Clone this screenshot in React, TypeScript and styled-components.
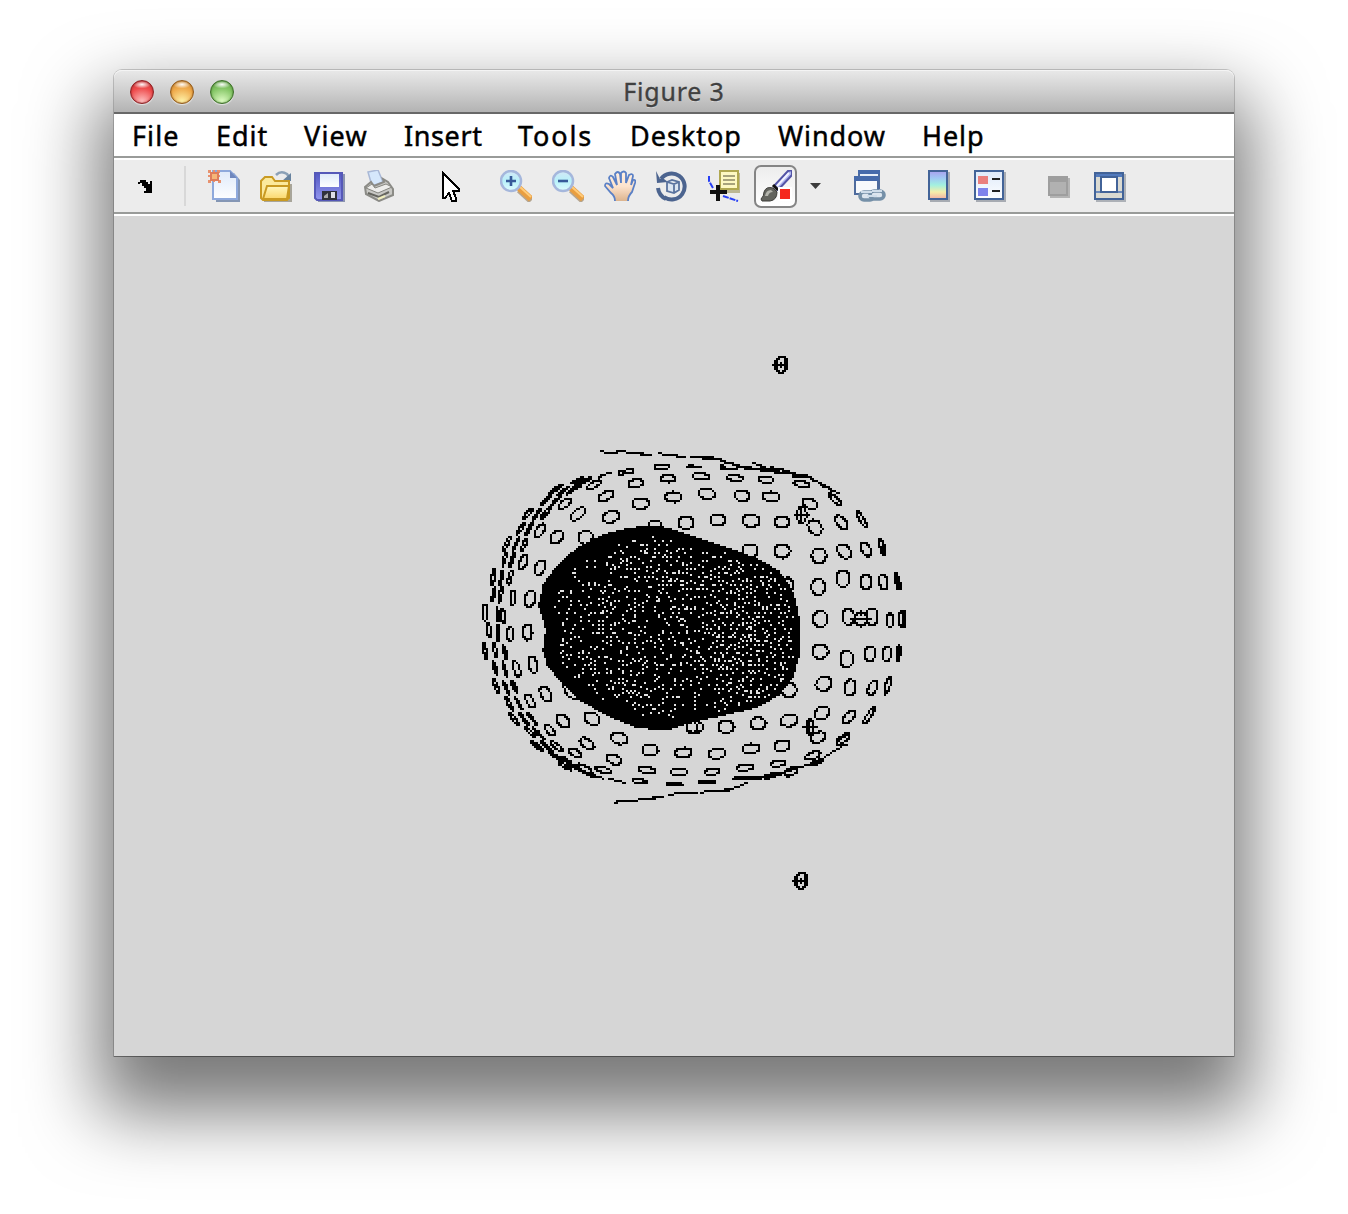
import React from "react";
import styled, { createGlobalStyle } from "styled-components";

const Global = createGlobalStyle`
  *{box-sizing:border-box}
  html,body{margin:0;background:#fff}
`;
const Page = styled.div`
  width: 1348px; height: 1214px; padding: 70px 114px 0; overflow: hidden; background: #fff;
`;
const Window = styled.div`
  width: 1120px; height: 986px; display: flex; flex-direction: column;
  border-radius: 8px 8px 0 0;
  box-shadow: 0 0 0 1px rgba(0,0,0,.18), 0 1px 0 rgba(0,0,0,.25), 0 41px 72px 16px rgba(0,0,0,.53);
`;
const TitleBar = styled.header`
  height: 44px; display: grid; grid-template-columns: 1fr auto 1fr; align-items: center;
  border-bottom: 2px solid #686868; border-radius: 8px 8px 0 0;
  background: linear-gradient(#e9e9e9, #cfcfcf 50%, #b3b3b3);
  box-shadow: inset 0 1px #f4f4f4;
`;
const Lights = styled.div`display: flex; gap: 16px; padding: 2px 0 0 16px;`;
const Light = styled.span<{ $dark: string; $mid: string; $glow: string }>`
  width: 24px; height: 24px; border-radius: 50%; border: 1.5px solid ${p => p.$dark};
  background:
    radial-gradient(ellipse 9px 4px at 50% 16%, rgba(255,255,255,.95), transparent),
    radial-gradient(circle at 50% 95%, ${p => p.$glow} 0, ${p => p.$mid} 60%, ${p => p.$dark} 150%);
  box-shadow: 0 1px 1px rgba(255,255,255,.6), inset 0 0 2px ${p => p.$dark};
`;
const Title = styled.h1`
  margin: 0; font: 400 25px/42px "Noto Sans", sans-serif; letter-spacing: .8px; color: #404040;
  -webkit-text-stroke: .35px #404040; text-shadow: 0 1px rgba(255,255,255,.5);
`;
const MenuBar = styled.nav`
  height: 44px; display: flex; padding-left: 18px; background: #fff; border-bottom: 2px solid #999b99;
`;
const MenuItem = styled.span<{ $w: number; $track: number }>`
  width: ${p => p.$w}px; letter-spacing: ${p => p.$track}px;
  font: 400 27px/43px "Noto Sans", sans-serif; color: #000; white-space: nowrap;
  -webkit-text-stroke: .45px #000;
`;
const ToolBar = styled.div`
  height: 56px; display: flex; align-items: center; background: #ececec;
  border-top: 2px solid #fff; border-bottom: 2px solid #999b99;
`;
const Tool = styled.span<{ $gap: number; $w?: number }>`
  width: ${p => p.$w ?? 32}px; height: 32px; margin-left: ${p => p.$gap}px; flex: none; display: flex;
`;
const Divider = styled.i`width: 2px; height: 40px; margin-left: 30px; background: #d8d8d8;`;
const Pressed = styled.span`
  width: 43px; height: 43px; margin-left: 14px; flex: none; border: 2px solid #858585; border-radius: 7px;
  display: flex; align-items: center; justify-content: center; background: linear-gradient(#ededed, #fff);
`;
const Caret = styled.i`
  width: 11px; height: 6px; margin-left: 13px; background: #3c3c3c; clip-path: polygon(0 0, 100% 0, 50% 100%);
`;
const Canvas = styled.main`
  flex: 1; background: #d6d6d6; border-top: 2px solid #fff; overflow: hidden;
  svg { display: block; margin-top: -2px; }
`;

const menus: [string, number, number][] = [
  ["File", 84, 1.1], ["Edit", 88, 1], ["View", 100, 1.2], ["Insert", 114, .6], ["Tools", 112, 1.9],
  ["Desktop", 148, 1], ["Window", 144, .9], ["Help", 80, .9],
];

const Ico = ({ w = 32, children }: { w?: number; children: React.ReactNode }) => (
  <svg width={w} height="32" viewBox={`0 0 ${w} 32`} fill="none">{children}</svg>
);
const DockArrow = () => (
  <Ico w={16}><path d="M0 12h2v-2h6v2h2v2h2v-3h2v12H6v-2h2v-3H6v-2H4v-3H2v1H0z" fill="#000" /></Ico>
);
const NewDoc = () => (
  <Ico>
    <path d="M8 3h18l6 7v22H8z" fill="#8496b4" />
    <path d="M5 1h17l7 7v21H5z" fill="url(#paper)" stroke="#8ea9dc" strokeWidth="2" />
    <path d="M22 1v7h7z" fill="#6f87bd" />
    <path d="M0 0h3v3H0zM9 0h3v3H9zM0 10h3v3H0zM10 10h3v3h-3zM5 0h2v12H5zM0 5h12v2H0z" fill="#e7926f" />
    <path d="M3 3h7v7H3z" fill="#f6b779" stroke="#de7d5c" strokeWidth="2" />
  </Ico>
);
const OpenFolder = () => (
  <Ico>
    <path d="M16 5q5-5 11-1l2 3" stroke="#8ba0b6" strokeWidth="2.5" /><path d="M31 3v8h-9z" fill="#67829f" />
    <path d="M4 31h26l1-17v17z" fill="#a8a59a" stroke="#a8a59a" strokeWidth="2" />
    <path d="M1 28V11l4-4h7l3 4h14v17l-2 2H3z" fill="#fbe99c" stroke="#c99a22" strokeWidth="2" />
    <path d="M3 29l4-13h22l-2 13z" fill="url(#gold)" stroke="#c99a22" strokeWidth="2" />
  </Ico>
);
const Save = () => (
  <Ico>
    <path d="M4 4h27v28H4z" fill="#8c94b0" />
    <path d="M1 3h27v27H3l-2-2z" fill="url(#blue)" stroke="#5558b8" strokeWidth="2" />
    <path d="M6 4h19v13H6z" fill="url(#paper)" /><path d="M8 21h15v9H8z" fill="#30323c" />
    <path d="M10 26l4-3v5h-4z" fill="#aaa" /><path d="M17 22h4v6h-4z" fill="#dedfe6" />
  </Ico>
);
const Print = () => (
  <Ico>
    <path d="M4 2l10-2 5 12-11 4z" fill="#d5e7fb" stroke="#a9b8d6" strokeWidth="1.5" />
    <path d="M1 17l6-5 3 4 10-4-1-3 5 3 5 7v6L15 31 2 24z" fill="#c8c8c4" stroke="#8b8b86" strokeWidth="2" />
    <path d="M2 18l12 5 14-6-6-3-11 4-3-4z" fill="#ededeb" stroke="#85857f" />
    <path d="M4 23l11 4 10-5" stroke="#66665f" strokeWidth="2" /><path d="M14 29l7-3" stroke="#f1efbd" strokeWidth="2" />
  </Ico>
);
const Pointer = () => (
  <Ico><path d="M9 3v25h2l4-5 3 8h4v-3l-3-7h6v-2z" fill="#fff" stroke="#000" strokeWidth="2" shapeRendering="crispEdges" /></Ico>
);
const Lens = ({ plus }: { plus?: boolean }) => (
  <Ico>
    <path d="M19 20l12 11" stroke="#b5a58f" strokeWidth="6" /><path d="M19 18l12 11" stroke="#e99e40" strokeWidth="6" />
    <path d="M20 17l11 10" stroke="#ffcb79" strokeWidth="2" />
    <circle cx="11" cy="11" r="10" fill="url(#glass)" stroke="#a5b7dc" strokeWidth="2.5" />
    <path d={plus ? "M6 11h10M11 6v10" : "M6 11h10"} stroke="#365a99" strokeWidth="2.6" />
  </Ico>
);
const Hand = () => (
  <Ico>
    <path d="M11 31q0-5-4-8l-6-7q0-4 4-2l4 4-4-10q1-4 4-1l4 8-2-11q3-4 5 0l1 9V3q3-3 5 0v10l3-8q4-2 4 1l-2 9 2-5q3-1 2 3l-3 9q-4 4-4 9z" fill="url(#skin)" />
    <path d="M11 31q0-5-4-8l-6-7q0-4 4-2l4 4-4-10q1-4 4-1l4 8-2-11q3-4 5 0l1 9V3q3-3 5 0v10l3-8q4-2 4 1l-2 9 2-5q3-1 2 3l-3 9q-4 4-4 9" stroke="#5a80c6" strokeWidth="1.8" />
  </Ico>
);
const Rotate = () => (
  <Ico>
    <path d="M5 9A13 13 0 1 1 8 27M2 18a14 14 0 0 0 8 11" stroke="#4c648f" strokeWidth="4" />
    <path d="M0 1l1 12 11-1-4-3-4 0z" fill="#4c648f" />
    <path d="M11 12l5-2 7 2v8l-5 3-7-2zM11 12l7 2 5-2M18 14v8" fill="#dce6f2" stroke="#5a739f" strokeWidth="1.8" />
  </Ico>
);
const DataTip = () => (
  <Ico>
    <path d="M13 3h19v20H13z" fill="#bcb793" /><path d="M12 1h18v18H12z" fill="#fdf8c2" stroke="#b0a850" strokeWidth="2" />
    <path d="M15 6h12M15 10h12M15 14h12" stroke="#a7a37c" strokeWidth="2" />
    <path d="M1 6v5l4 7M15 26l6 2 9 3" stroke="#273ff5" strokeWidth="2" strokeDasharray="6 1" />
    <path d="M2 22h17M10 15v16" stroke="#111" strokeWidth="4" />
  </Ico>
);
const Brush = () => (
  <Ico>
    <path d="M14 16L28 1l4-1v5L18 20z" fill="#aeb5ef" stroke="#5354a6" strokeWidth="2" />
    <path d="M17 16L29 3" stroke="#f1f2ff" strokeWidth="2" />
    <path d="M1 29q3-3 3-7 2-6 9-4l4 4q0 8-7 9H2z" fill="#64655f" stroke="#3e3e3a" />
    <path d="M5 26q1-6 6-6l2 2q-4 0-5 4z" fill="#b4b5ad" /><path d="M13 15l5 5" stroke="#111" strokeWidth="3" />
    <path d="M18 17h14v14H18z" fill="#fff" /><path d="M20 19h10v10H20z" fill="#f5281d" />
  </Ico>
);
const Link = () => (
  <Ico>
    <path d="M5 1h20v17H5z" fill="#e7eef8" stroke="#4e6b9d" strokeWidth="2" /><path d="M4 0h22v4H4z" fill="#466aab" />
    <path d="M1 7h23v17H1z" fill="#f7f9fc" stroke="#4e6b9d" strokeWidth="2" /><path d="M0 6h25v5H0z" fill="#466aab" />
    <rect x="6" y="22" width="14" height="8" rx="4" fill="#dce5ee" stroke="#7590a8" strokeWidth="3.6" />
    <rect x="16" y="21" width="14" height="8" rx="4" fill="#dce5ee" stroke="#7590a8" strokeWidth="3.6" />
    <path d="M7 22h11M18 21h10M13 26h10" stroke="#cfddea" strokeWidth="1.8" />
  </Ico>
);
const ColorBar = () => (
  <Ico w={22}><path d="M2 2h20v30H2z" fill="#a7abb2" /><path d="M1 1h18v28H1z" fill="url(#rainbow)" stroke="#426398" strokeWidth="2" /></Ico>
);
const Legend = () => (
  <Ico>
    <path d="M2 2h30v30H2z" fill="#a7abb2" /><path d="M1 1h28v28H1z" fill="url(#paper)" stroke="#426398" strokeWidth="2" />
    <path d="M4 6h10v8H4z" fill="#ea7f7d" /><path d="M4 18h10v8H4z" fill="#7e83ec" />
    <path d="M18 9h8M18 21h8" stroke="#222" strokeWidth="2" />
  </Ico>
);
const HideTools = () => (
  <Ico w={22}><path d="M2 8h20v20H2z" fill="#b4b4b4" /><path d="M0 6h20v20H0z" fill="#9e9e9e" /><path d="M2 12h16v12H2z" fill="#b1b1b1" /></Ico>
);
const ShowTools = () => (
  <Ico>
    <path d="M2 4h30v28H2z" fill="#adb1b7" /><path d="M1 3h28v26H1z" fill="#dadad2" stroke="#426398" strokeWidth="2" />
    <path d="M2 4h26v3H2z" fill="#527abd" /><path d="M2 22h26" stroke="#6c8abb" strokeWidth="2" />
    <path d="M7 7h16v15H7z" fill="#fff" stroke="#426398" strokeWidth="2" />
  </Ico>
);

type Ring = [number, number, number, number, number];
type Quad = { dx: number; dy: number; rings: Ring[]; lines: number[][] };

// Lens outlines: centre x, centre y, radii and tilt in degrees, in thirds of a pixel.
const quads: Quad[] = [
  { dx: 0, dy: 0, rings: [
    [560,80,22,7,0],[648,80,12,3,0],[438,98,9,5,0],[462,94,12,7,-10],[358,134,24,9,-30],[483,130,22,12,-8],[579,116,23,10,0],
    [393,168,24,13,-25],[497,190,25,16,0],[595,171,25,15,5],[270,191,24,10,-38],[309,222,26,13,-38],[408,230,25,17,-15],
    [540,255,20,14,0],[633,248,23,18,0],[331,292,22,20,-20],[195,271,22,12,-55],[245,291,22,16,-50],[145,365,23,11,-65],
    [195,383,23,15,-65],[114,473,23,8,-85],[165,476,25,15,-80],[160,220,20,5,-50],[211,220,22,5,-50],[186,222,20,3,-50],
    [138,265,22,4,-55],[164,264,22,3,-60],[95,312,23,5,-65],[123,312,20,3,-65],[148,313,20,5,-65],[88,358,22,4,-75],
    [111,360,22,4,-70],[55,411,24,5,-80],[79,412,22,3,-80],[105,412,22,5,-78],[56,463,22,4,-80],[77,463,24,4,-80],
    [30,518,24,7,90],[67,520,22,3,85],[84,528,22,6,85],[243,147,24,4,-35],[262,155,22,3,-35],[305,122,22,3,-25],
    [290,150,22,2,-40],[325,125,26,3,-30],[212,182,20,3,-45],[240,185,22,3,-45]],
    lines: [[370,112,390,102,410,98],[376,33,400,38,445,34,465,38,530,44],[480,41,525,44],[395,39,425,40],[550,39,580,46,630,50],[575,43,615,49],[652,50,665,50],[275,162,300,148,345,118]] },
  { dx: 645, dy: 0, rings: [
    [32,109,25,10,5],[135,114,24,9,8],[229,119,22,9,3],[335,132,24,9,12],[50,161,25,16,8],[156,167,23,16,10],[243,170,26,14,5],
    [360,191,23,15,20],[83,240,23,17,0],[183,242,25,18,5],[276,246,23,17,5],[375,262,24,19,50],[454,247,24,13,50],[515,238,30,7,58],
    [435,178,24,8,40],[335,225,24,14,90],[180,332,23,20,0],[276,333,24,21,0],[387,347,22,22,0],[462,334,24,17,50],
    [528,328,23,13,60],[577,322,25,7,75],[582,328,16,3,75],[385,441,24,21,90],[459,416,24,20,90],[528,426,22,17,90],[580,426,22,13,80],
    [623,424,26,6,80],[623,430,18,2,80],[297,433,20,13,70],[391,537,24,22,90],[475,530,24,18,90],[513,537,22,17,90],[546,530,25,17,90],
    [600,541,22,10,90],[632,537,22,7,90],[641,537,24,3,90],[120,78,28,7,3],[265,93,24,6,8],[330,108,24,4,6]],
    lines: [[5,50,70,52,100,64,150,78,240,92,300,100,350,110,400,135,445,160],[40,54,95,58],[0,78,35,80],[90,84,140,84],
      [190,70,240,88],[240,82,280,88,300,98,360,112,400,138,440,158],[150,82,240,95],[315,225,358,225],[335,200,335,250],
      [485,537,540,537],[513,512,513,522],[513,552,513,560]] },
  { dx: 0, dy: 540, rings: [
    [157,36,24,14,90],[106,42,22,10,90],[42,32,22,6,85],[69,40,24,3,90],[30,92,24,4,82],[60,90,22,4,78],[90,97,22,4,75],
    [60,144,22,4,75],[90,148,24,3,72],[125,147,24,9,72],[174,134,25,13,78],[63,198,24,5,70],[92,202,22,3,68],[118,200,22,4,65],
    [102,250,24,4,60],[131,250,22,2,58],[165,243,22,10,58],[212,222,25,14,60],[288,208,32,18,60],[116,296,24,5,52],[146,296,22,3,50],
    [170,295,24,3,50],[224,330,20,9,45],[264,303,24,15,45],[351,296,25,18,30],[165,336,22,4,48],[190,340,24,3,45],[186,378,24,4,42],
    [216,380,22,3,42],[244,378,24,7,40],[336,371,24,13,35],[433,355,25,17,10],[299,398,22,10,30],[417,418,24,14,20],[525,390,24,17,0],
    [625,398,25,14,-5],[386,450,24,8,15],[515,450,26,9,5],[612,456,26,10,-3],[495,484,23,5,5],[598,492,23,3,0],[240,408,22,3,38],
    [268,438,22,4,32],[280,425,26,3,38],[330,448,24,10,30],[335,460,26,3,28],[650,322,16,18,0]],
    lines: [[205,370,240,405,300,445,350,465,385,474],[220,400,265,415,310,450],[400,476,450,488],[418,548,435,543,484,540,530,534,565,530],[520,534,540,534],[580,524,610,520,660,516],[310,430,350,446]] },
  { dx: 645, dy: 540, rings: [
    [391,94,24,22,0],[470,117,24,20,90],[540,101,22,16,100],[590,101,22,13,95],[625,100,26,6,95],[625,100,20,2,95],[401,191,24,21,-30],
    [480,203,24,17,100],[548,203,23,12,115],[593,197,28,7,108],[297,210,22,22,0],[396,279,25,18,-30],[478,290,24,13,-45],
    [537,287,30,7,-55],[15,321,25,18,0],[108,320,24,18,0],[204,311,24,18,0],[297,301,26,18,-10],[359,320,24,11,90],
    [384,352,24,15,-20],[460,356,24,10,-40],[81,400,25,15,-8],[183,386,26,14,-5],[276,377,24,16,-12],[66,455,23,9,-5],
    [165,443,25,9,-5],[264,430,24,9,-8],[368,407,24,10,-22],[303,455,20,11,-25],[50,486,25,3,-3],[240,468,20,6,-12],[378,428,22,5,-20]],
    lines: [[0,518,20,518],[30,518,50,515,120,508,170,490],[60,512,115,510],[128,476,200,472,240,465,290,455,330,440,380,430,420,400,470,372],
      [135,472,200,476,260,466,300,452],[440,366,478,342],[338,320,383,320],[359,295,359,348]] },
];

const hull = [190,495,205,430,240,385,280,345,320,315,380,285,440,268,520,255,560,258,645,284,705,305,795,335,860,362,910,390,945,435,
  963,480,973,535,975,645,955,710,915,765,850,802,755,825,645,848,600,865,560,873,480,862,400,830,320,785,260,730,215,675,203,630,212,570,205,540];

const inside = (x: number, y: number) => {
  let hit = false;
  for (let i = 0, j = hull.length - 2; i < hull.length; j = i, i += 2) {
    const [ax, ay, bx, by] = [hull[i], hull[i + 1], hull[j], hull[j + 1]];
    if (ay > y !== by > y && x < ((bx - ax) * (y - ay)) / (by - ay) + ax) hit = !hit;
  }
  return hit;
};

// Point markers seen almost edge-on: a bold ring, its bar and a short stem.
const marker = [
  "...####.",
  "..##..##",
  ".##...##",
  ".##.#.##",
  "########",
  ".##.#.##",
  ".##...##",
  "..##.##.",
  "...###..",
];

// The plot is rasterised into cells of 2x2 pixels.
const buildPlot = () => {
  const ink = new Set<string>();
  const put = (x: number, y: number) => ink.add(`${Math.floor((361 + x / 3) / 2) * 2} ${Math.floor((224 + y / 3) / 2) * 2}`);
  const stroke = (pts: number[], dx: number, dy: number) => {
    for (let i = 0; i + 3 < pts.length; i += 2) {
      const n = Math.max(Math.abs(pts[i + 2] - pts[i]), Math.abs(pts[i + 3] - pts[i + 1])) / 5;
      for (let k = 0; k <= n; k++) put(dx + pts[i] + ((pts[i + 2] - pts[i]) * k) / n, dy + pts[i + 1] + ((pts[i + 3] - pts[i + 1]) * k) / n);
    }
  };
  for (const { dx, dy, rings, lines } of quads) {
    for (const [cx, cy, rx, ry, tilt] of rings) {
      const a = (tilt * Math.PI) / 180;
      for (let k = 0; k < 40; k++) {
        const t = (k * Math.PI) / 20;
        const u = rx * Math.cos(t), v = ry * Math.sin(t);
        put(dx + cx + u * Math.cos(a) - v * Math.sin(a), dy + cy + u * Math.sin(a) + v * Math.cos(a));
      }
    }
    lines.forEach(l => stroke(l, dx, dy));
  }
  for (const [x, y] of [[658, 140], [678, 656]]) {
    marker.forEach((row, r) => [...row].forEach((c, k) => c === "#" && ink.add(`${x + k * 2} ${y + r * 2}`)));
  }
  const specks: string[] = [];
  let seed = 71;
  const rnd = () => ((seed = (seed * 16807) % 2147483647) / 2147483647);
  for (let py = 308; py < 520; py += 2) for (let px = 424; px < 690; px += 2) {
    const x = (px + 1 - 361) * 3, y = (py + 1 - 224) * 3;
    if (!inside(x, y)) continue;
    put(x, y);
    if (px % 4 || py % 4) continue;
    const cx = 590, cy = 565;
    const at = (k: number) => inside(cx + (x - cx) * k, cy + (y - cy) * k);
    const density = !at(x > 720 ? 1.06 : 1.13) ? 0 : !at(1.35) ? 0.36 : 0.48;
    const boost = x > 720 ? 0.17 : 0;
    if (rnd() < (density ? density + boost : 0)) {
      specks.push(`${px + (rnd() < 0.3 ? 2 : 0)} ${py + (rnd() < 0.3 ? 2 : 0)}`);
    }
  }
  const cells = (list: Iterable<string>) => Array.from(list, c => `M${c}h2v2h-2z`).join("");
  return { ink: cells(ink), specks: cells(specks) };
};
const plot = buildPlot();

const Grad = ({ id, stops }: { id: string; stops: string[] }) => (
  <linearGradient id={id} x1="0" y1="0" x2="0" y2="1">
    {stops.map((c, i) => <stop key={i} offset={i / (stops.length - 1)} stopColor={c} />)}
  </linearGradient>
);
const Hidden = styled.svg`position: absolute;`;

export default function App() {
  return (
    <Page>
      <Global />
      <Hidden width="0" height="0"><defs>
        <Grad id="paper" stops={["#dfeafa", "#fdfeff"]} />
        <Grad id="gold" stops={["#fff7bd", "#fbd76c"]} />
        <Grad id="blue" stops={["#5358c3", "#9296ee"]} />
        <Grad id="glass" stops={["#d3e8f6", "#b7f1fa", "#e0fcff"]} />
        <Grad id="skin" stops={["#fff0e2", "#fde3cd", "#dcb48e"]} />
        <Grad id="rainbow" stops={["#a9a0ee", "#a0c8f4", "#a2f0e0", "#f4eeaa", "#f2b0a4"]} />
      </defs></Hidden>
      <Window>
        <TitleBar>
          <Lights>
            <Light $dark="#8e1f22" $mid="#ee4a4b" $glow="#ffc4c4" />
            <Light $dark="#935a1a" $mid="#efa94a" $glow="#fff5ac" />
            <Light $dark="#3c7027" $mid="#82c463" $glow="#e3ffc8" />
          </Lights>
          <Title>Figure 3</Title>
        </TitleBar>
        <MenuBar>{menus.map(([label, w, track]) => <MenuItem key={label} $w={w} $track={track}>{label}</MenuItem>)}</MenuBar>
        <ToolBar>
          <Tool $gap={24} $w={16}><DockArrow /></Tool>
          <Divider />
          <Tool $gap={22}><NewDoc /></Tool>
          <Tool $gap={20}><OpenFolder /></Tool>
          <Tool $gap={22}><Save /></Tool>
          <Tool $gap={18}><Print /></Tool>
          <Tool $gap={38}><Pointer /></Tool>
          <Tool $gap={34}><Lens plus /></Tool>
          <Tool $gap={20}><Lens /></Tool>
          <Tool $gap={20}><Hand /></Tool>
          <Tool $gap={20}><Rotate /></Tool>
          <Tool $gap={20}><DataTip /></Tool>
          <Pressed><Brush /></Pressed>
          <Caret />
          <Tool $gap={33}><Link /></Tool>
          <Tool $gap={42} $w={22}><ColorBar /></Tool>
          <Tool $gap={24}><Legend /></Tool>
          <Tool $gap={42} $w={22}><HideTools /></Tool>
          <Tool $gap={24}><ShowTools /></Tool>
        </ToolBar>
        <Canvas>
          <svg width="1120" height="842" viewBox="0 -2 1120 842" shapeRendering="crispEdges">
            <path d={plot.ink} fill="#000" />
            <path d={plot.specks} fill="#e2e2e2" />
          </svg>
        </Canvas>
      </Window>
    </Page>
  );
}
